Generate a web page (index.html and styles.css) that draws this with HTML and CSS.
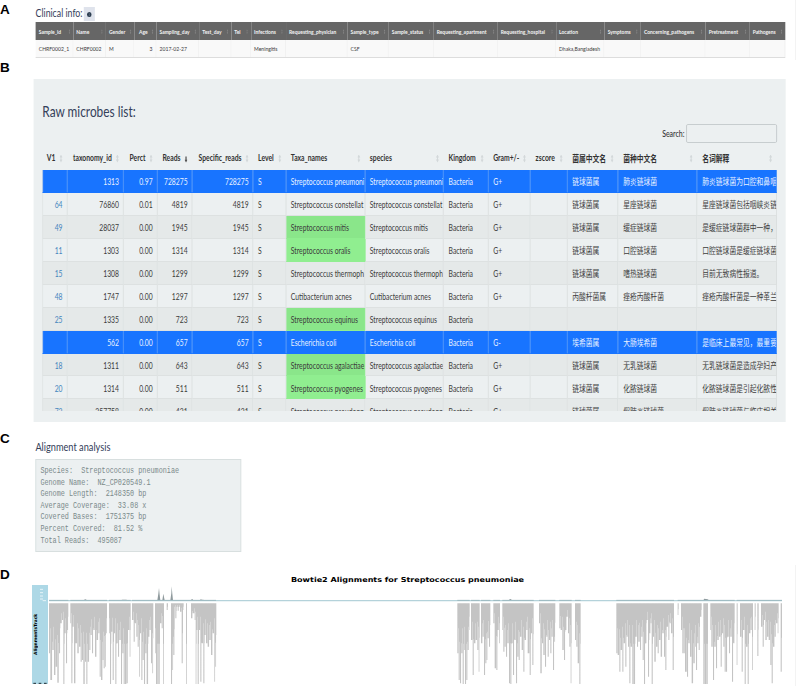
FILE: index.html
```
<!DOCTYPE html>
<html lang="en">
<head>
  <meta charset="UTF-8">
  <meta name="viewport" content="width=device-width, initial-scale=1.0">
  <title>Microbes report</title>
  <link rel="stylesheet" href="styles.css">
</head>
<body>
<section class="figure figure-a">
  <div class="letter">A</div>
  <div class="narrow clinical">
    <div class="clinical-title">
      <h4>Clinical info:</h4>
      <span class="info-btn">
        <svg viewBox="0 0 10 10" width="6" height="5" preserveAspectRatio="none"><circle cx="5" cy="5" r="5" fill="#2c3e50"/><path d="M5 2v1.5M5 4.5v3.5" stroke="#8d97a8" stroke-width="1"/></svg>
      </span>
    </div>
    <table class="info-table">
      <colgroup id="infoCols"></colgroup>
      <thead>
        <tr><th>Sample_id</th><th>Name</th><th>Gender</th><th class="num">Age</th><th>Sampling_day</th><th>Test_day</th><th>Tel</th><th>Infections</th><th>Requesting_physician</th><th>Sample_type</th><th>Sample_status</th><th>Requesting_apartment</th><th>Requesting_hospital</th><th>Location</th><th>Symptoms</th><th>Concerning_pathogens</th><th>Pretreatment</th><th>Pathogens</th></tr>
      </thead>
      <tbody>
        <tr><td>CHRF0002_1</td><td>CHRF0002</td><td>M</td><td class="num">3</td><td>2017-02-27</td><td></td><td></td><td>Meningitis</td><td></td><td>CSF</td><td></td><td></td><td></td><td>Dhaka,Bangladesh</td><td></td><td></td><td></td><td></td></tr>
      </tbody>
    </table>
  </div>
</section>

<section class="figure figure-b">
  <div class="letter">B</div>
  <div class="narrow microbes">
    <h3>Raw microbes list:</h3>
    <div class="search"><label for="search">Search:</label><input id="search" type="text"></div>
    <div class="scroll">
      <table class="list-table">
        <colgroup id="listCols"></colgroup>
        <thead>
          <tr><th class="num">V1</th><th class="num">taxonomy_id</th><th class="num">Perct</th><th class="num sorted">Reads</th><th class="num">Specific_reads</th><th>Level</th><th>Taxa_names</th><th>species</th><th>Kingdom</th><th>Gram+/-</th><th>zscore</th><th>菌属中文名</th><th>菌种中文名</th><th>名词解释</th></tr>
        </thead>
        <tbody>
          <tr class="selected"><td></td><td>1313</td><td>0.97</td><td>728275</td><td>728275</td><td>S</td><td>Streptococcus pneumoni</td><td>Streptococcus pneumoni</td><td>Bacteria</td><td>G+</td><td></td><td>链球菌属</td><td>肺炎链球菌</td><td>肺炎链球菌为口腔和鼻咽</td></tr>
          <tr><td>64</td><td>76860</td><td>0.01</td><td>4819</td><td>4819</td><td>S</td><td>Streptococcus constellat</td><td>Streptococcus constellat</td><td>Bacteria</td><td>G+</td><td></td><td>链球菌属</td><td>星座链球菌</td><td>星座链球菌包括咽峡炎链</td></tr>
          <tr><td>49</td><td>28037</td><td>0.00</td><td>1945</td><td>1945</td><td>S</td><td class="hit">Streptococcus mitis</td><td>Streptococcus mitis</td><td>Bacteria</td><td>G+</td><td></td><td>链球菌属</td><td>缓症链球菌</td><td>是缓症链球菌群中一种，</td></tr>
          <tr><td>11</td><td>1303</td><td>0.00</td><td>1314</td><td>1314</td><td>S</td><td class="hit">Streptococcus oralis</td><td>Streptococcus oralis</td><td>Bacteria</td><td>G+</td><td></td><td>链球菌属</td><td>口腔链球菌</td><td>口腔链球菌是缓症链球菌</td></tr>
          <tr><td>15</td><td>1308</td><td>0.00</td><td>1299</td><td>1299</td><td>S</td><td>Streptococcus thermoph</td><td>Streptococcus thermoph</td><td>Bacteria</td><td>G+</td><td></td><td>链球菌属</td><td>嗜热链球菌</td><td>目前无致病性报道。</td></tr>
          <tr><td>48</td><td>1747</td><td>0.00</td><td>1297</td><td>1297</td><td>S</td><td>Cutibacterium acnes</td><td>Cutibacterium acnes</td><td>Bacteria</td><td>G+</td><td></td><td>丙酸杆菌属</td><td>痤疮丙酸杆菌</td><td>痤疮丙酸杆菌是一种革兰</td></tr>
          <tr><td>25</td><td>1335</td><td>0.00</td><td>723</td><td>723</td><td>S</td><td class="hit">Streptococcus equinus</td><td>Streptococcus equinus</td><td>Bacteria</td><td></td><td></td><td></td><td></td><td></td></tr>
          <tr class="selected"><td></td><td>562</td><td>0.00</td><td>657</td><td>657</td><td>S</td><td>Escherichia coli</td><td>Escherichia coli</td><td>Bacteria</td><td>G-</td><td></td><td>埃希菌属</td><td>大肠埃希菌</td><td>是临床上最常见，最重要</td></tr>
          <tr><td>18</td><td>1311</td><td>0.00</td><td>643</td><td>643</td><td>S</td><td class="hit">Streptococcus agalactiae</td><td>Streptococcus agalactiae</td><td>Bacteria</td><td>G+</td><td></td><td>链球菌属</td><td>无乳链球菌</td><td>无乳链球菌是造成孕妇产</td></tr>
          <tr><td>20</td><td>1314</td><td>0.00</td><td>511</td><td>511</td><td>S</td><td class="hit">Streptococcus pyogenes</td><td>Streptococcus pyogenes</td><td>Bacteria</td><td>G+</td><td></td><td>链球菌属</td><td>化脓链球菌</td><td>化脓链球菌是引起化脓性</td></tr>
          <tr><td>72</td><td>257758</td><td>0.00</td><td>421</td><td>421</td><td>S</td><td>Streptococcus pseudopn</td><td>Streptococcus pseudopn</td><td>Bacteria</td><td>G+</td><td></td><td>链球菌属</td><td>假肺炎链球菌</td><td>假肺炎链球菌与临床相关</td></tr>
        </tbody>
      </table>
    </div>
  </div>
</section>

<section class="figure figure-c">
  <div class="letter">C</div>
  <div class="narrow alignment">
    <h4>Alignment analysis</h4>
    <pre>Species:  Streptococcus pneumoniae
Genome Name:  NZ_CP020549.1
Genome Length:  2148350 bp
Average Coverage:  33.08 x
Covered Bases:  1751375 bp
Percent Covered:  81.52 %
Total Reads:  495087</pre>
  </div>
</section>

<section class="figure figure-d">
  <div class="letter">D</div>
  <div class="plot">
    <h5>Bowtie2 Alignments for Streptococcus pneumoniae</h5>
    <div class="tracks">
      <div class="track-name">
        <span>AlignmentsTrack</span>
        <svg class="scale" width="16" height="99" viewBox="0 0 48 297">
          <path d="M24 13h9M24 23h9M24 33h9M24 42h9M32 47h10" stroke="#fff" stroke-opacity=".7" stroke-width="3"/>
          <path d="M4 295h8M20 295h8M36 295h8" stroke="#1f2d33" stroke-width="3"/>
        </svg>
      </div>
      <!-- three units per pixel -->
      <svg class="reads" width="735" height="99" viewBox="144 0 2205 297">
        <path class="peaks" d="M472 46l3-20 2-17 2 20 2 17zM487 46l3-20 4 20zM511 46l3-22 1-20 2 22 2 20zM573 46l3-5 4 5zM600 46l2-3 4 1 8 1v1zM250 46l6-3 6 3zM362 46l5-2 12 0 4 2zM1525 46l6-4 6 4zM2110 46l3-5 10 2 4 3z"/>
        <path class="baseline" d="M147 47H2346"/>
        <path class="coverage" d="M147 46H205M211 46H321M327 46H392M396 46H648M1372 46H1409M1413 46H1439M1443 46H1471M1480 46H1500M1507 46H1601M1617 46H1666M1678 46H1715M1725 46H1742M1849 46H2022M2033 46H2204M2210 46H2346"/>
        <path class="bars" id="bars"/>
      </svg>
    </div>
  </div>
</section>
<script src="script.js"></script>
</body>
</html>
```

FILE: styles.css
```
* {
  box-sizing: border-box;
}

body {
  margin: 0;
  width: 796px;
  height: 686px;
  overflow: hidden;
  background-color: #fff;
  color: #3c3c3c;
  font-family: Lato, "Noto Sans CJK SC", sans-serif;
}

h3, h4, h5 {
  margin: 0;
  font-weight: 400;
  color: #34405a;
  white-space: nowrap;
}

.figure {
  display: flex;
  overflow: hidden;
}

.figure-a { height: 60px; border-right: 1px solid #f3f3f3; }
.figure-b { height: 370px; }
.figure-c { height: 135px; }
.figure-d { height: 121px; border-right: 1px solid #f3f3f3; }

.letter {
  flex: none;
  width: 32px;
  padding-top: 2px;
  color: #000;
  font: bold 13.5px/15px "Liberation Sans", Arial, sans-serif;
}

.figure-a .letter { padding-top: 2px; }
.figure-b .letter { padding-top: 0; }
.figure-c .letter { padding-top: 1px; }

/* the panels are drawn wider and squeezed horizontally */
.narrow {
  --k: 0.79;
  --shift: 0.6px;
  flex: none;
  transform: translateX(var(--shift)) scaleX(var(--k));
  transform-origin: 0 0;
}

table {
  width: 100%;
  table-layout: fixed;
  border-collapse: separate;
  border-spacing: 0;
}

th, td {
  overflow: hidden;
  white-space: nowrap;
  text-align: left;
  padding: 0;
}

th {
  position: relative;
}

/* sort arrows */
th::after {
  content: "";
  position: absolute;
  right: 6px;
  top: 50%;
  width: 4px;
  height: 8px;
  margin-top: -2px;
  background-color: #d3d8da;
  clip-path: polygon(50% 0, 100% 38%, 65% 38%, 65% 62%, 100% 62%, 50% 100%, 0 62%, 35% 62%, 35% 38%, 0 38%);
}

th.sorted::after {
  background-color: #555;
  clip-path: polygon(30% 25%, 70% 25%, 70% 65%, 100% 65%, 50% 100%, 0 65%, 30% 65%);
}

/* clinical info */
.clinical {
  width: calc(750px / var(--k));
  margin-left: 3px;
}

.clinical-title {
  display: flex;
  height: 22.3px;
  padding-top: 5px;
}

.clinical-title h4 {
  font-size: 11.1px;
  line-height: 15px;
}

.info-btn {
  display: flex;
  align-items: center;
  justify-content: center;
  width: 14px;
  height: 14px;
  margin: 2px 0 0 2px;
  background-color: #dfe3ec;
}

.info-table {
  border-bottom: 1px solid #ddd;
}

.info-table th {
  height: 17.7px;
  padding-left: 4px;
  background-color: #666;
  color: #f4f4f4;
  font-size: 6.25px;
}

.info-table th::after {
  right: 4px;
  width: 2px;
  height: 5px;
  margin-top: -2px;
  background-color: #858585;
}

.info-table td {
  height: 17px;
  padding-left: 4px;
  border-right: 1px solid #eee;
  background-color: #f9f9f9;
  font-size: 6.45px;
}

.info-table th.num {
  text-align: right;
  padding-right: 11px;
}

.info-table td.num {
  text-align: right;
  padding-right: 4px;
}

/* microbes list */
.microbes {
  width: calc(752px / var(--k));
  height: 343px;
  margin: 19px 0 0 1px;
  padding: 0 11px;
  background-color: #ecf0f1;
}

.microbes h3 {
  padding-top: 22px;
  font-size: 15px;
  line-height: 20px;
}

.search {
  display: flex;
  justify-content: flex-end;
  align-items: center;
  height: 19px;
  margin-top: 3px;
  color: #333;
  font-size: 8.8px;
  font-weight: 500;
}

.search input {
  width: 115px;
  height: 19px;
  margin-left: 2px;
  border: 1px solid #c3c8ca;
  border-radius: 2px;
  background-color: #ecf0f1;
}

.scroll {
  height: 268px;
  overflow: hidden;
}

.list-table th {
  height: 27px;
  padding: 3px 0 0 6px;
  color: #333;
  font-size: 8.6px;
  font-weight: 700;
}

.list-table th.num {
  text-align: right;
  padding-right: 15px;
  padding-left: 0;
}

.list-table td {
  height: 22.95px;
  padding-top: 3px;
  padding-left: 6px;
  border-right: 1px solid #d9dddd;
  border-bottom: 1px solid #dde1e1;
  font-size: 8.6px;
  line-height: 12px;
}

.list-table td:nth-child(-n+5) {
  text-align: right;
  padding-left: 0;
  padding-right: 5px;
}

.list-table td:first-child {
  border-left: 1px solid #d9dddd;
  color: #4585bd;
}

.list-table tr:nth-child(odd) td {
  background-color: #e5e9e9;
}

.list-table tr td.hit {
  background-color: #90ee90;
  border-color: #90ee90;
}

.list-table tr:nth-child(odd) td.hit {
  background-color: #8ae68a;
}

.list-table tr.selected td {
  background-color: #1874ff;
  border-bottom-color: #1874ff;
  border-right-color: #5f9ff5;
  color: #e8f1ff;
}

/* alignment analysis */
.alignment {
  --k: 0.83;
  --shift: 0.4px;
  width: calc(205.5px / var(--k));
  margin-left: 3px;
}

.alignment h4 {
  padding-top: 9px;
  font-size: 11.1px;
  line-height: 16px;
}

.alignment pre {
  height: 92.5px;
  margin: 4.3px 0 0;
  padding: 5px;
  border: 1px solid #d8dfdf;
  background-color: #ecf0f1;
  color: #7b8a8b;
  font: 8.2px/11.55px "Liberation Mono", monospace;
}

/* bowtie2 plot */
.plot {
  width: 751px;
}

.plot h5 {
  height: 20px;
  padding-top: 9px;
  text-align: center;
  color: #000;
  font: bold 6.8px/12px "DejaVu Sans", sans-serif;
  transform: scaleX(1.185);
}

.tracks {
  display: flex;
}

.track-name {
  position: relative;
  width: 16px;
  height: 99px;
  background-color: #add8e6;
}

.track-name span {
  position: absolute;
  left: 0;
  top: 30px;
  height: 40px;
  writing-mode: vertical-rl;
  transform: rotate(180deg);
  color: #000;
  font: bold 4.4px/7px "DejaVu Sans", sans-serif;
}

.scale {
  position: absolute;
  left: 0;
  top: 0;
}

.peaks { fill: #8f9a9d; }
.baseline { stroke: #b4d2da; stroke-width: 4; }
.coverage { stroke: #8faab2; stroke-width: 2; }
.bars { fill: #c4c4c4; }
```

FILE: script.js
```
// right-hand edges of the columns
const infoEdges = [35.7, 73.3, 106, 134.7, 156.5, 199.3, 231.3, 251, 286, 347.5, 388.7, 433.7, 497.7, 556, 604.7, 641, 705.7, 749.7, 785.7];
const listEdges = [42.3, 67.3, 123.7, 157.3, 192.3, 253.3, 286, 365, 443.7, 488.3, 530.7, 567.3, 618.3, 697.3, 776.6];

function addCols(id, edges) {
  const group = document.getElementById(id);
  const total = edges[edges.length - 1] - edges[0];
  for (let i = 1; i < edges.length; i++) {
    const col = document.createElement('col');
    col.style.width = `${(edges[i] - edges[i - 1]) / total * 100}%`;
    group.appendChild(col);
  }
}

addCols('infoCols', infoEdges);
addCols('listCols', listEdges);

// read pile-up: x:depth, depth 0 is a gap
const pileups = [
  [0, '147:150 151:230 157:140 162:215 167:190 172:238 177:150 181:60 186:50 190:242 194:90 198:180 202:80 205:0 211:60 214:240 218:70 222:240 227:120 232:150 237:130 242:175 246:170 250:242 255:175 259:242 263:175 268:140 272:95 276:150 280:80 285:160 290:110 295:90 299:220 303:230 308:170 311:195 315:190 318:90 321:0 327:90 330:242 334:85 338:230 342:90 346:242 350:120 354:160 358:110 363:242 367:150 371:242 375:242 380:240 384:80 389:160 392:0 396:50 401:115 405:60 409:100 413:130 417:220 420:90 424:230 428:170 432:242 436:150 440:242 445:100 449:80 453:180 457:210 460:0 465:150 468:242 472:242 476:242 480:60 485:75 489:242 492:0 500:20 504:0 513:242 517:200 520:155 524:10 526:45 530:10 533:22 537:10 540:25 545:180 549:20 551:0 558:242 561:0 573:45 578:30 584:50 587:242 590:80 593:242 597:80 601:235 605:120 610:240 614:95 618:120 623:130 628:110 633:155 638:90 643:235 646:190 649:0'],
  [810, '562:150 566:230 570:240 574:150 578:242 582:140 585:242 589:230 593:140 597:80 599:0 603:110 608:215 612:120 617:110 622:140 626:205 629:0 633:120 638:100 642:215 646:180 650:170 653:105 657:130 661:0 670:60 674:195 679:200 683:80 687:120 690:0 697:80 700:145 704:130 708:160 712:120 717:240 721:242 725:120 729:215 733:110 738:240 742:160 746:170 750:100 755:140 760:205 764:110 769:80 773:150 779:215 783:90 787:185 791:0'],
  [1578, '39:60 43:210 48:120 52:155 57:190 61:100 65:160 69:110 73:150 77:100 81:200 85:115 88:0 100:75 104:80 109:140 114:170 118:80 122:40 126:90 130:130 134:240 137:0 147:110 151:130 155:180 160:242 164:0 271:150 275:155 280:205 284:140 289:205 293:120 298:190 302:100 306:130 310:240 314:130 319:242 324:242 328:100 333:130 337:115 342:140 346:100 350:170 354:242 358:120 362:50 366:220 370:90 374:60 377:242 381:100 385:175 390:130 395:150 399:110 404:160 409:90 414:160 418:200 422:70 427:110 431:60 435:90 440:200 444:0 455:35 458:0 465:80 469:150 473:150 477:205 483:220 487:120 492:160 497:240 502:180 507:130 510:200 514:120 518:140 522:40 527:0 532:242 537:242 542:242 546:0 553:80 556:130 561:230 565:130 570:195 574:110 579:100 584:190 588:90 592:130 596:205 600:205 604:100 609:150 613:100 618:235 622:120 626:0 632:185 635:0 642:100 647:205 651:80 656:242 660:130 665:242 669:90 674:80 678:200 681:0 686:80 689:0 694:158 698:0 705:70 710:130 714:50 718:110 723:100 728:110 733:185 737:240 741:130 746:100 750:60 755:90 758:0 764:205 768:0']
];

// each bar is full width near the top and thinner towards its tip
let d = '';
pileups.forEach(([offset, text]) => {
  const points = text.split(' ').map(p => p.split(':').map(Number));
  for (let i = 0; i < points.length - 1; i++) {
    const [x, depth] = points[i];
    if (depth > 0) {
      const left = x + offset;
      const width = points[i + 1][0] - x;
      const body = Math.round(depth * 0.5);
      d += `M${left} 55v${body}h${width}v-${body}z`;
      d += `M${left} ${55 + body}v${depth - body}h${width - 0.8}v-${depth - body}z`;
    }
  }
});
document.getElementById('bars').setAttribute('d', d);
```
